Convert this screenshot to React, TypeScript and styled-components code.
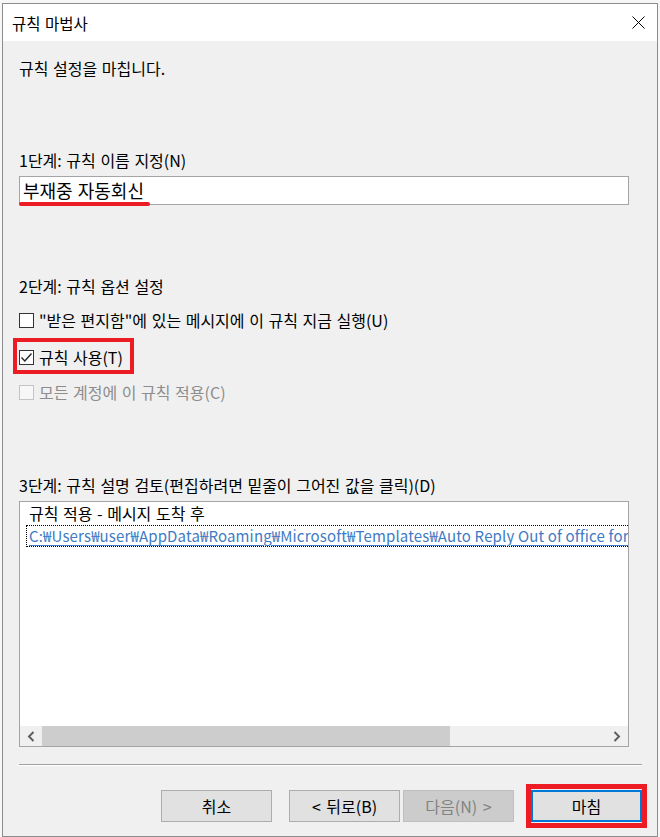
import React from 'react';
import styled, { createGlobalStyle, css } from 'styled-components';

const GlobalStyle = createGlobalStyle`
  html, body { margin: 0; padding: 0; background: #f7f7f7; }
  body {
    font-family: "Noto Sans CJK KR", "Noto Sans", sans-serif;
    font-size: 16px;
    word-spacing: 1px;
    color: #000;
  }
  * { box-sizing: border-box; }
`;

const Window = styled.div`
  margin: 3px 0 0 2px;
  width: 656px;
  height: 834px;
  border: 1px solid #8c8c8c;
  background: #f0f0f0;
  display: flex;
  flex-direction: column;
`;

const TitleBar = styled.div`
  height: 37px;
  background: #fff;
  display: flex;
  align-items: center;
  justify-content: space-between;
  padding: 0 12px 0 9px;
  flex: none;
`;

const Title = styled.div`
  font-size: 15.5px;
  line-height: 20px;
`;

const Body = styled.div`
  flex: 1;
  display: flex;
  flex-direction: column;
  padding: 17px 15px 0 16px;
`;

const Text = styled.div<{ $mt?: number }>`
  line-height: 20px;
  height: 20px;
  white-space: nowrap;
  margin-top: ${(p) => p.$mt ?? 0}px;
`;

const NameField = styled.div`
  position: relative;
  margin-top: 6px;
  width: 610px;
  height: 29px;
  border: 1px solid #a5a5a5;
  background: #fff;
  padding-left: 3px;
  font-size: 18px;
  line-height: 26px;
  white-space: nowrap;
`;

const Underline = styled.span`
  position: absolute;
  left: -1px;
  top: 25px;
  width: 131px;
  height: 4px;
  border-radius: 2px;
  background: #ed1c24;
`;

const CheckRow = styled.div<{ $mt: number; $disabled?: boolean }>`
  position: relative;
  display: flex;
  align-items: center;
  gap: 5px;
  height: 20px;
  line-height: 20px;
  white-space: nowrap;
  margin-top: ${(p) => p.$mt}px;
  color: ${(p) => (p.$disabled ? '#8d8d8d' : '#000')};
  align-self: flex-start;
`;

const Box = styled.span<{ $disabled?: boolean }>`
  width: 15px;
  height: 15px;
  flex: none;
  display: flex;
  align-items: center;
  justify-content: center;
  border: 1px solid ${(p) => (p.$disabled ? '#c4c4c4' : '#333')};
  background: ${(p) => (p.$disabled ? '#f7f7f7' : '#fff')};
`;

const RedFrame = styled.span`
  position: absolute;
  left: -6px;
  top: -9px;
  width: 121px;
  height: 36px;
  border: 4px solid #ed1c24;
  pointer-events: none;
`;

const ListBox = styled.div`
  margin-top: 6px;
  width: 610px;
  height: 246px;
  border: 1px solid #a5a5a5;
  background: #fff;
  display: flex;
  flex-direction: column;
`;

const ListContent = styled.div`
  flex: 1;
  overflow: hidden;
  padding: 1px 0 0 6px;
`;

const RuleLine = styled.div`
  line-height: 20px;
  padding-left: 3px;
  white-space: nowrap;
`;

const PathLine = styled.div`
  margin-top: 2px;
  width: max-content;
  border: 1px dotted #000;
  padding: 0 4px 0 2px;
  font-size: 15px;
  letter-spacing: 0.15px;
  word-spacing: 0;
  line-height: 20px;
  white-space: nowrap;
  color: #3e7bc4;
  text-decoration: underline;
  text-decoration-color: #3e7bc4;
  text-underline-offset: 3px;
`;

const ScrollBar = styled.div`
  height: 20px;
  flex: none;
  display: flex;
  background: #f0f0f0;
`;

const ArrowBtn = styled.div`
  width: 22px;
  flex: none;
  display: flex;
  align-items: center;
  justify-content: center;
`;

const Thumb = styled.div`
  width: 408px;
  background: #cdcdcd;
`;

const Track = styled.div`
  flex: 1;
`;

const Separator = styled.div`
  margin-top: 17px;
  height: 2px;
  border-top: 1px solid #a0a0a0;
  border-bottom: 1px solid #ffffff;
`;

const ButtonRow = styled.div`
  margin-top: 24px;
  display: flex;
  justify-content: flex-end;
`;

const Button = styled.div<{ $variant?: 'default' | 'disabled'; $mr?: number }>`
  position: relative;
  width: 111px;
  height: 32px;
  display: flex;
  align-items: center;
  justify-content: center;
  background: #e1e1e1;
  border: 1px solid #adadad;
  font-size: 16px;
  word-spacing: 2px;
  margin-right: ${(p) => p.$mr ?? 0}px;
  ${(p) =>
    p.$variant === 'disabled' &&
    css`
      background: #cccccc;
      border-color: #bfbfbf;
      color: #838383;
    `}
  ${(p) =>
    p.$variant === 'default' &&
    css`
      border: 2px solid #0078d7;
    `}
`;

const ButtonFrame = styled.span`
  position: absolute;
  top: -8px;
  bottom: -8px;
  left: -7px;
  right: -7px;
  border: 5px solid #ed1c24;
  pointer-events: none;
`;

const CloseIcon = () => (
  <svg width="13" height="13" viewBox="0 0 13 13">
    <path d="M0.5 0.5 L12.5 12.5 M12.5 0.5 L0.5 12.5" stroke="#000" strokeWidth="1" fill="none" />
  </svg>
);

const CheckMark = () => (
  <svg width="13" height="13" viewBox="0 0 13 13">
    <path d="M1.5 6.5 L4.8 10 L11.5 2.5" stroke="#222" strokeWidth="1.3" fill="none" />
  </svg>
);

const Chevron = ({ dir }: { dir: 'left' | 'right' }) => (
  <svg width="8" height="11" viewBox="0 0 8 11">
    <path
      d={dir === 'left' ? 'M6.5 1 L2 5.5 L6.5 10' : 'M1.5 1 L6 5.5 L1.5 10'}
      stroke="#606060"
      strokeWidth="2"
      fill="none"
    />
  </svg>
);

export default function App() {
  return (
    <>
      <GlobalStyle />
      <Window>
        <TitleBar>
          <Title>규칙 마법사</Title>
          <CloseIcon />
        </TitleBar>
        <Body>
          <Text>규칙 설정을 마칩니다.</Text>

          <Text $mt={72}>1단계: 규칙 이름 지정(N)</Text>
          <NameField>
            부재중 자동회신
            <Underline />
          </NameField>

          <Text $mt={71}>2단계: 규칙 옵션 설정</Text>
          <CheckRow $mt={14}>
            <Box />
            "받은 편지함"에 있는 메시지에 이 규칙 지금 실행(U)
          </CheckRow>
          <CheckRow $mt={17}>
            <Box>
              <CheckMark />
            </Box>
            규칙 사용(T)
            <RedFrame />
          </CheckRow>
          <CheckRow $mt={15} $disabled>
            <Box $disabled />
            모든 계정에 이 규칙 적용(C)
          </CheckRow>

          <Text $mt={73}>3단계: 규칙 설명 검토(편집하려면 밑줄이 그어진 값을 클릭)(D)</Text>
          <ListBox>
            <ListContent>
              <RuleLine>규칙 적용 - 메시지 도착 후</RuleLine>
              <PathLine>
                C:₩Users₩user₩AppData₩Roaming₩Microsoft₩Templates₩Auto Reply Out of office form.oft
              </PathLine>
            </ListContent>
            <ScrollBar>
              <ArrowBtn>
                <Chevron dir="left" />
              </ArrowBtn>
              <Thumb />
              <Track />
              <ArrowBtn>
                <Chevron dir="right" />
              </ArrowBtn>
            </ScrollBar>
          </ListBox>

          <Separator />

          <ButtonRow>
            <Button $mr={17}>취소</Button>
            <Button $mr={3}>&lt; 뒤로(B)</Button>
            <Button $mr={17} $variant="disabled">
              다음(N) &gt;
            </Button>
            <Button $variant="default">
              마침
              <ButtonFrame />
            </Button>
          </ButtonRow>
        </Body>
      </Window>
    </>
  );
}
